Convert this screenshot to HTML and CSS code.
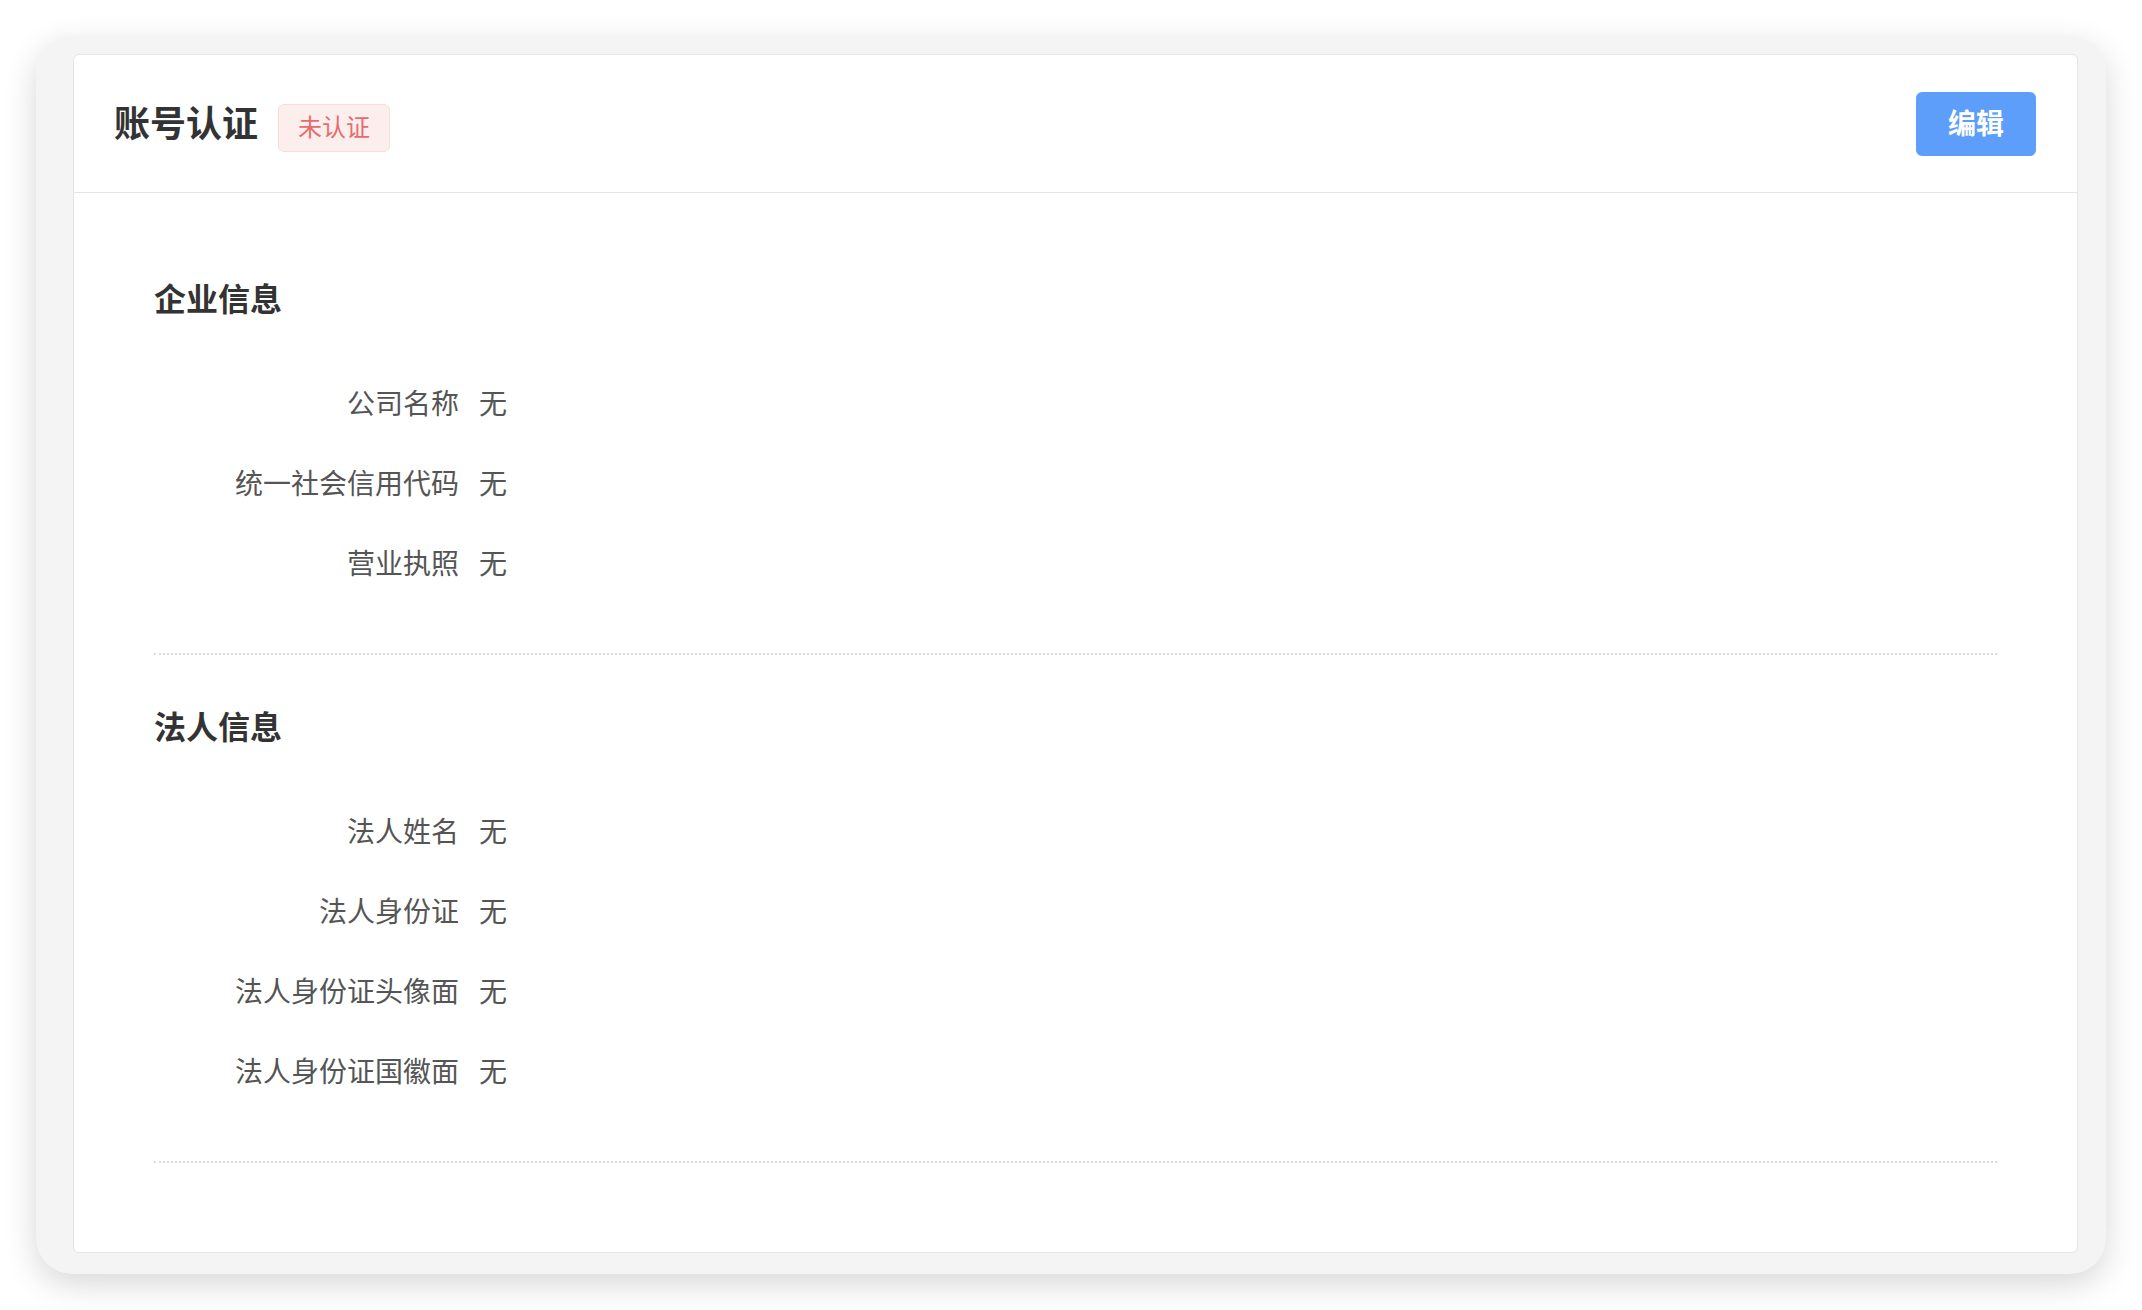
FILE: index.html
```html
<!DOCTYPE html>
<html lang="zh-CN">
<head>
<meta charset="utf-8">
<title>账号认证</title>
<link rel="stylesheet" href="styles.css">
</head>
<body>
<div class="frame">
  <div class="card">
    <div class="card-header">
      <div class="title-wrap">
        <h1 class="title">账号认证</h1>
        <span class="badge">未认证</span>
      </div>
      <button class="btn-edit" type="button">编辑</button>
    </div>
    <div class="card-body">
      <section class="section">
        <h2 class="section-title">企业信息</h2>
        <div class="rows">
          <div class="row"><span class="label">公司名称</span><span class="value">无</span></div>
          <div class="row"><span class="label">统一社会信用代码</span><span class="value">无</span></div>
          <div class="row"><span class="label">营业执照</span><span class="value">无</span></div>
        </div>
      </section>
      <section class="section">
        <h2 class="section-title">法人信息</h2>
        <div class="rows">
          <div class="row"><span class="label">法人姓名</span><span class="value">无</span></div>
          <div class="row"><span class="label">法人身份证</span><span class="value">无</span></div>
          <div class="row"><span class="label">法人身份证头像面</span><span class="value">无</span></div>
          <div class="row"><span class="label">法人身份证国徽面</span><span class="value">无</span></div>
        </div>
      </section>
    </div>
  </div>
</div>
</body>
</html>
```
FILE: styles.css
```css
* { box-sizing: border-box; }
html, body { margin: 0; padding: 0; background: #ffffff; }
body {
  font-family: "Noto Sans CJK SC", "Noto Sans", sans-serif;
  color: #333;
}
.frame {
  margin: 36px;
  height: 1238px;
  background: #f4f4f5;
  border-radius: 36px;
  padding: 18px 28px 21px 37px;
  box-shadow: 0 10px 32px rgba(0, 0, 0, 0.16);
  display: flex;
  flex-direction: column;
}
.card {
  flex: 1;
  background: #fff;
  border: 1px solid #e4e4ea;
  border-radius: 6px;
  display: flex;
  flex-direction: column;
}
.card-header {
  height: 138px;
  border-bottom: 1px solid #e4e4ea;
  display: flex;
  align-items: center;
  justify-content: space-between;
  padding: 0 41px 0 40px;
}
.title-wrap { display: flex; align-items: center; }
.title {
  margin: -6px 0 0 0;
  font-size: 36px;
  font-weight: 700;
  color: #333;
  line-height: 48px;
}
.badge {
  margin: 8px 0 0 20px;
  height: 48px;
  line-height: 42px;
  padding: 0 19px;
  font-size: 24px;
  color: #e36d6d;
  background: #fdeeee;
  border: 1px solid #f8dcdc;
  border-radius: 6px;
}
.btn-edit {
  width: 120px;
  height: 64px;
  border: none;
  border-radius: 6px;
  background: #5c9ef9;
  color: #fff;
  font-family: inherit;
  font-size: 28px;
  font-weight: 700;
  line-height: 40px;
  padding: 0 0 4px 0;
  margin-top: 1px;
}
.card-body {
  padding: 34px 80px 0 80px;
}
.section {
  padding: 48px 0 51px;
  border-bottom: 2px dotted #dadade;
}
.section-title {
  margin: 0;
  font-size: 32px;
  line-height: 44px;
  font-weight: 700;
  color: #333;
}
.rows { margin-top: 43px; }
.row {
  display: flex;
  height: 80px;
  align-items: center;
  font-size: 28px;
  line-height: 40px;
  color: #555;
}
.label {
  width: 305px;
  text-align: right;
  margin-right: 20px;
}
.value { color: #555; }
```
